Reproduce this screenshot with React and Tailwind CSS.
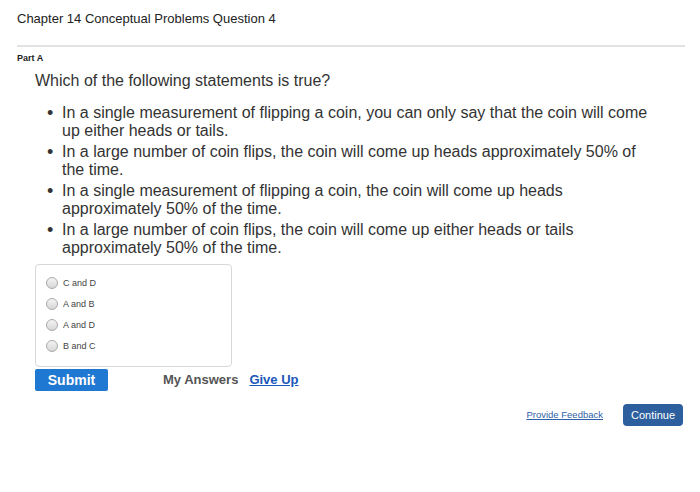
import React from "react";

const statements = [
  "In a single measurement of flipping a coin, you can only say that the coin will come up either heads or tails.",
  "In a large number of coin flips, the coin will come up heads approximately 50% of the time.",
  "In a single measurement of flipping a coin, the coin will come up heads approximately 50% of the time.",
  "In a large number of coin flips, the coin will come up either heads or tails approximately 50% of the time.",
];

const choices = ["C and D", "A and B", "A and D", "B and C"];

export default function App() {
  return (
    <div className="w-[700px] h-[492px] bg-white font-['Liberation_Sans',Arial,sans-serif] text-[#333]">
      <div className="pl-[17px] pr-[15px] pt-[11px]">
        <h1 className="text-[13px] leading-[16px] text-[#222]">
          Chapter 14 Conceptual Problems Question 4
        </h1>
        <div className="mt-[18px] h-[2px] bg-[#e2e2e2]" />
        <div className="mt-[6px] text-[9px] leading-[11px] font-bold text-[#222]">Part A</div>

        <div className="pl-[18px]">
          <p className="mt-[7px] text-[16px] leading-[19px] text-[#333]">
            Which of the following statements is true?
          </p>
          <ul className="mt-[14px] flex flex-col gap-[3px]">
            {statements.map((s) => (
              <li key={s} className="flex text-[16px] leading-[18px] text-[#333]">
                <span className="w-[27px] shrink-0 pl-[12px] text-[18px] leading-[18px]">•</span>
                <span className="w-[588px]">{s}</span>
              </li>
            ))}
          </ul>

          <div className="mt-[7px] w-[197px] h-[103px] border border-[#d8d8d8] rounded-[4px] pt-[12px] pl-[10px] flex flex-col gap-[9px]">
            {choices.map((c) => (
              <label key={c} className="flex items-center gap-[5px] h-[12px]">
                <span className="w-[12px] h-[12px] rounded-full border border-[#aaa] bg-gradient-to-b from-[#f4f4f4] to-[#d6d6d6]" />
                <span className="text-[9px] leading-[12px] text-[#444]">{c}</span>
              </label>
            ))}
          </div>

          <div className="mt-[2px] flex items-center">
            <button className="w-[73px] h-[22px] bg-[#1f78d1] rounded-[2px] text-white text-[14px] font-bold leading-[22px]">
              Submit
            </button>
            <span className="ml-[55px] text-[13px] font-bold text-[#555]">My Answers</span>
            <span className="ml-[11px] text-[13px] font-bold text-[#1a56b8] underline">Give Up</span>
          </div>
        </div>

        <div className="mt-[13px] flex justify-end items-center pr-[2px]">
          <span className="text-[9.5px] text-[#2f5fa8] underline">Provide Feedback</span>
          <button className="ml-[20px] w-[60px] h-[22px] bg-[#2d5f9e] rounded-[4px] text-white text-[11px] leading-[22px]">
            Continue
          </button>
        </div>
      </div>
    </div>
  );
}
